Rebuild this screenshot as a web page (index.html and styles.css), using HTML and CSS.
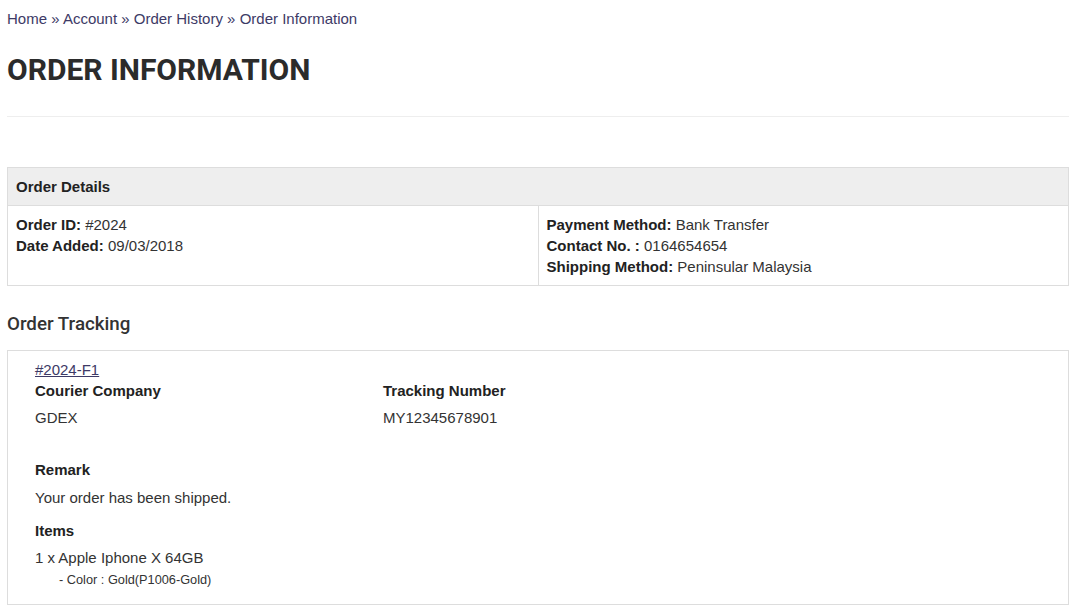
FILE: index.html
```html
<!DOCTYPE html>
<html>
<head>
<meta charset="utf-8">
<link rel="stylesheet" href="styles.css">
</head>
<body>
<div class="page">
  <nav class="breadcrumb">
    <a href="#">Home</a> » <a href="#">Account</a> » <a href="#">Order History</a> » <a href="#">Order Information</a>
  </nav>
  <h1 class="title">ORDER INFORMATION</h1>
  <hr class="divider">

  <table class="details">
    <thead>
      <tr><th colspan="2">Order Details</th></tr>
    </thead>
    <tbody>
      <tr>
        <td class="half">
          <div><b>Order ID:</b> #2024</div>
          <div><b>Date Added:</b> 09/03/2018</div>
        </td>
        <td class="half">
          <div><b>Payment Method:</b> Bank Transfer</div>
          <div><b>Contact No. :</b> 0164654654</div>
          <div><b>Shipping Method:</b> Peninsular Malaysia</div>
        </td>
      </tr>
    </tbody>
  </table>

  <h2 class="subtitle">Order Tracking</h2>

  <div class="tracking">
    <a href="#" class="fid">#2024-F1</a>
    <div class="cols">
      <div class="col">
        <div class="label">Courier Company</div>
        <div class="value">GDEX</div>
      </div>
      <div class="col">
        <div class="label">Tracking Number</div>
        <div class="value">MY12345678901</div>
      </div>
    </div>
    <div class="label remark">Remark</div>
    <div class="value remark-text">Your order has been shipped.</div>
    <div class="label items">Items</div>
    <div class="value">1 x Apple Iphone X 64GB</div>
    <div class="option">- Color : Gold(P1006-Gold)</div>
  </div>
</div>
</body>
</html>
```

FILE: styles.css
```css
html, body {
  margin: 0;
  padding: 0;
  background: #fff;
}
body {
  font-family: "Liberation Sans", Arial, sans-serif;
  font-size: 15px;
  color: #333;
}
.page {
  padding: 0 14px 0 7px;
}
.breadcrumb {
  padding-top: 9px;
  font-size: 15px;
  line-height: 20px;
  color: #3d3a66;
}
.breadcrumb a {
  color: #3d3a66;
  text-decoration: none;
}
.title {
  margin: 0;
  padding-top: 21px;
  font-family: Roboto, "Liberation Sans", sans-serif;
  font-weight: 700;
  font-size: 30px;
  line-height: 40px;
  color: #2b2b2b;
}
.divider {
  margin: 26px 0 0 0;
  border: 0;
  border-top: 1px solid #eee;
  height: 0;
}
.details {
  margin-top: 50px;
  width: 100%;
  border-collapse: collapse;
  border: 1px solid #ddd;
}
.details th {
  background: #eee;
  text-align: left;
  font-weight: 700;
  font-size: 15px;
  height: 37px;
  padding: 0 8px;
  border: 1px solid #ddd;
  color: #222;
}
.details td {
  vertical-align: top;
  padding: 8px 8px 8px 8px;
  line-height: 21px;
  border: 1px solid #ddd;
  width: 50%;
}
.details b {
  color: #222;
}
.subtitle {
  margin: 0;
  padding-top: 26px;
  font-family: Roboto, "Liberation Sans", sans-serif;
  font-weight: 500;
  font-size: 18.75px;
  line-height: 24px;
  color: #333;
}
.tracking {
  margin-top: 14px;
  border: 1px solid #ddd;
  padding: 9px 27px 13px 27px;
}
.fid {
  display: block;
  color: #3d3a66;
  text-decoration: underline;
  line-height: 20px;
}
.cols {
  display: grid;
  grid-template-columns: 348px 348px;
}
.label {
  font-weight: 700;
  color: #222;
  line-height: 22px;
}
.value {
  line-height: 22px;
  padding-top: 5px;
}
.remark {
  margin-top: 30px;
}
.remark-text {
  padding-top: 6px;
}
.items {
  margin-top: 11px;
}
.option {
  font-size: 12.75px;
  padding-left: 24px;
  line-height: 22px;
}
```
